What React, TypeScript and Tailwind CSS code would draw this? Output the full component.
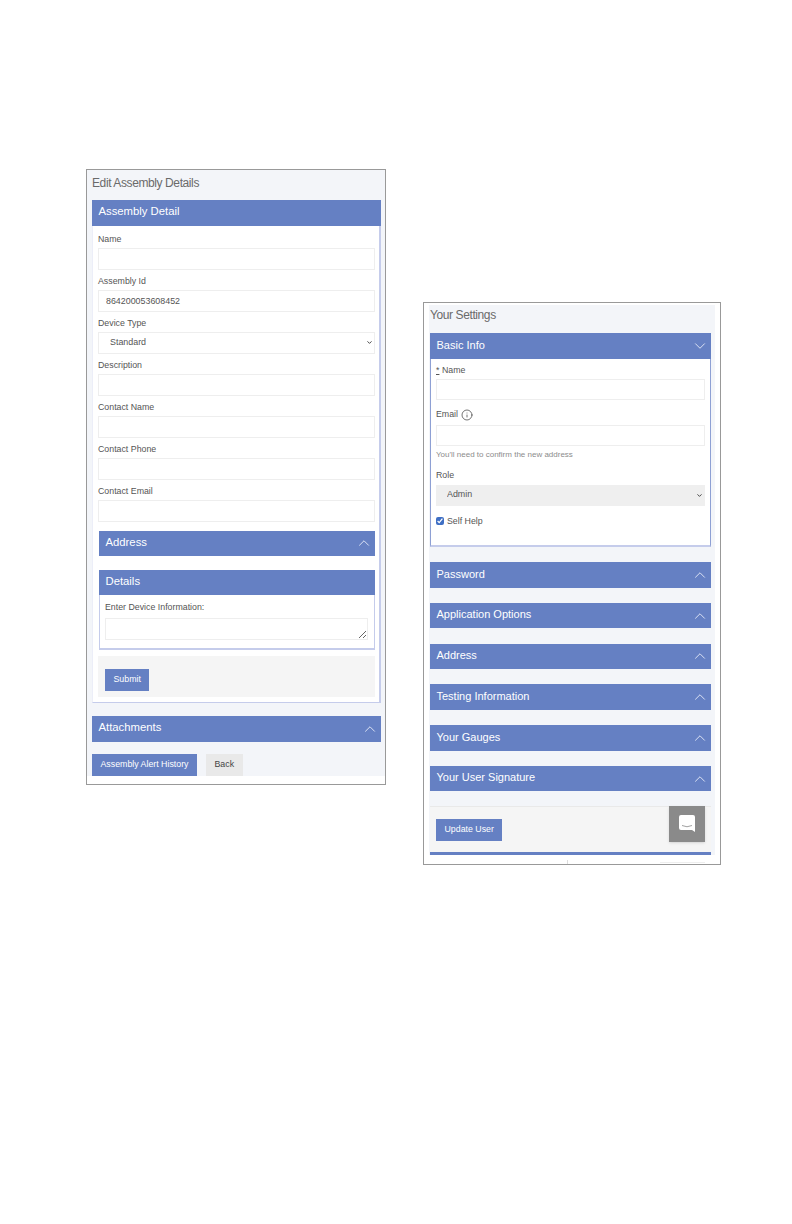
import { ChevronDown, ChevronUp, Info } from "lucide-react";

const inputClass = "block w-full border border-[#eeeeee] bg-white px-[7px] text-[8.9px] text-[#555] outline-none";
const labelClass = "h-[16px] pt-[1px] text-[8.8px] leading-[12px] text-[#555]";

function Field({ label, value, last }: { label: string; value?: string; last?: boolean }) {
  return (
    <div className={last ? "" : "mb-[4px]"}>
      <div className={labelClass}>{label}</div>
      <input className={`${inputClass} h-[22px]`} defaultValue={value} readOnly />
    </div>
  );
}

function Bar({ title, open, icon = true, small }: { title: string; open?: boolean; icon?: boolean; small?: boolean }) {
  return (
    <div className={`flex h-[25.5px] items-center justify-between bg-[#6580c3] pl-[6.5px] pr-[2px] text-white ${small ? "text-[11px]" : "text-[11.3px]"}`}>
      <span className="-mt-[2px]">{title}</span>
      {icon && (open ? <ChevronDown size={18} strokeWidth={1.2} className="text-[#e6ebf8]" /> : <ChevronUp size={18} strokeWidth={1.2} className="text-[#e6ebf8]" />)}
    </div>
  );
}

function Button({ children, light }: { children: string; light?: boolean }) {
  return (
    <button className={`h-[22px] px-[8.5px] text-[8.8px] ${light ? "bg-[#e9e9e9] text-[#444]" : "bg-[#6580c3] text-white"}`}>
      {children}
    </button>
  );
}

function SelectBox({ value, className }: { value: string; className: string }) {
  return (
    <div className="relative">
      <select className={`block w-full appearance-none pl-[11px] text-[8.9px] text-[#555] outline-none ${className}`} defaultValue={value}>
        <option>{value}</option>
      </select>
      <ChevronDown size={7} strokeWidth={3} className="pointer-events-none absolute right-[2px] top-[7px] text-[#333]" />
    </div>
  );
}

function EditAssembly() {
  return (
    <div className="h-[616px] w-[300px] shrink-0 border border-[#999999] bg-white">
      <div className="h-[606px] bg-[#f3f5f9] px-[5px]">
        <div className="h-[30px] pt-[5px] text-[12px] leading-[16px] tracking-[-0.4px] text-[#6a6a6a]">Edit Assembly Details</div>
        <div className="w-[289px]">
          <Bar title="Assembly Detail" icon={false} />
          <div className="h-[477.500px] border-b border-l border-r-2 border-b-[#c5cceb] border-l-[#eceef8] border-r-[#c5cceb] bg-white pl-[5px] pr-[4px] pt-[6px]">
            <Field label="Name" />
            <Field label="Assembly Id" value="864200053608452" />
            <div className="mb-[4px]">
              <div className={labelClass}>Device Type</div>
              <SelectBox value="Standard" className="h-[22px] border border-[#eeeeee] bg-white" />
            </div>
            <Field label="Description" />
            <Field label="Contact Name" />
            <Field label="Contact Phone" />
            <Field label="Contact Email" last />
            <div className="ml-[1px] mt-[9px]">
              <Bar title="Address" />
            </div>
            <div className="ml-[1px] mt-[13.500px]">
              <Bar title="Details" icon={false} />
              <div className="h-[55px] border-x border-b-2 border-x-[#c5cceb] border-b-[#c5cceb] bg-white pl-[5px] pr-[6px] pt-[6px]">
                <div className="mb-[5px] text-[8.8px] leading-[12px] text-[#555]">Enter Device Information:</div>
                <textarea className="block h-[22px] w-full border border-[#eeeeee] bg-white" readOnly />
              </div>
            </div>
            <div className="mt-[6px] flex h-[41px] items-start bg-[#f5f5f5] px-[7px] pt-[13px]">
              <Button>Submit</Button>
            </div>
          </div>
          <div className="mt-[13px]">
            <Bar title="Attachments" />
          </div>
          <div className="mt-[12.500px] flex gap-[9px]">
            <Button>Assembly Alert History</Button>
            <Button light>Back</Button>
          </div>
        </div>
      </div>
    </div>
  );
}

function YourSettings() {
  const sections = ["Application Options", "Address", "Testing Information", "Your Gauges", "Your User Signature"];
  return (
    <div className="relative mt-[133px] h-[563px] w-[298px] shrink-0 border border-[#999999] bg-white pt-[2px]">
      <div className="mx-[5px] h-[550px] bg-[#f3f5f9] px-[1px]">
        <div className="h-[28px] pt-[2px] text-[12px] leading-[16px] tracking-[-0.4px] text-[#6a6a6a]">Your Settings</div>
        <div className="w-[281px]">
          <Bar title="Basic Info" open small />
          <div className="h-[188.500px] border-x border-b-2 border-x-[#8ea0d4] border-b-[#c5cceb] bg-white px-[5px] pt-[4px]">
            <div className="mb-[1.500px] text-[8.8px] leading-[15px] text-[#555]">
              <span className="underline">*</span> Name
            </div>
            <input className={`${inputClass} h-[21px]`} readOnly />
            <div className="mb-[3px] mt-[7px] flex h-[15px] items-center gap-[3px] text-[8.8px] text-[#555]">
              Email <Info size={12} strokeWidth={1.5} className="text-[#444]" />
            </div>
            <input className={`${inputClass} h-[20.500px]`} readOnly />
            <div className="mt-[2px] text-[8px] leading-[13px] text-[#8c8c8c]">You'll need to confirm the new address</div>
            <div className="mb-[3px] mt-[7px] text-[8.8px] leading-[14px] text-[#555]">Role</div>
            <SelectBox value="Admin" className="h-[21px] bg-[#efefef]" />
            <label className="mt-[9px] flex items-center gap-[3px] text-[8.8px] leading-[12px] text-[#555]">
              <input type="checkbox" defaultChecked readOnly className="m-0 h-[8px] w-[8px] accent-[#3f6fc4]" />
              Self Help
            </label>
          </div>
          <div className="mt-[15px]">
            <Bar title="Password" small />
          </div>
          {sections.map((s) => (
            <div key={s} className="mt-[15.300px]">
              <Bar title={s} small />
            </div>
          ))}
          <div className="mt-[14.500px] flex h-[46px] items-start border-t border-[#e9e9e9] bg-[#f5f5f5] pl-[6px] pt-[12px]">
            <Button>Update User</Button>
          </div>
          <div className="h-[3px] bg-[#6580c3]" />
        </div>
      </div>
      {/* chat launcher sits over the footer */}
      <div className="absolute left-[245px] top-[503px] flex h-[36px] w-[36px] items-center justify-center bg-[#8a8a8a] shadow">
        <svg width="18" height="18" viewBox="0 0 18 18">
          <path d="M3 0h12a2 2 0 0 1 2 2v15l-3-2H3a2 2 0 0 1-2-2V2a2 2 0 0 1 2-2z" fill="#fff" />
          <path d="M4 10.500q5 2.500 10 0" fill="none" stroke="#8a8a8a" strokeWidth="0.8" />
        </svg>
      </div>
      <div className="absolute bottom-0 left-[143px] h-[4px] w-px bg-[#dddddd]" />
      <div className="absolute bottom-[1px] left-[236px] h-px w-[45px] bg-[#eeeeee]" />
    </div>
  );
}

export default function App() {
  return (
    <div className="h-[1224px] w-[792px] overflow-hidden bg-white font-['Liberation_Sans',Arial,sans-serif]">
      <div className="flex items-start gap-[37px] pl-[86px] pt-[169px]">
        <EditAssembly />
        <YourSettings />
      </div>
    </div>
  );
}
